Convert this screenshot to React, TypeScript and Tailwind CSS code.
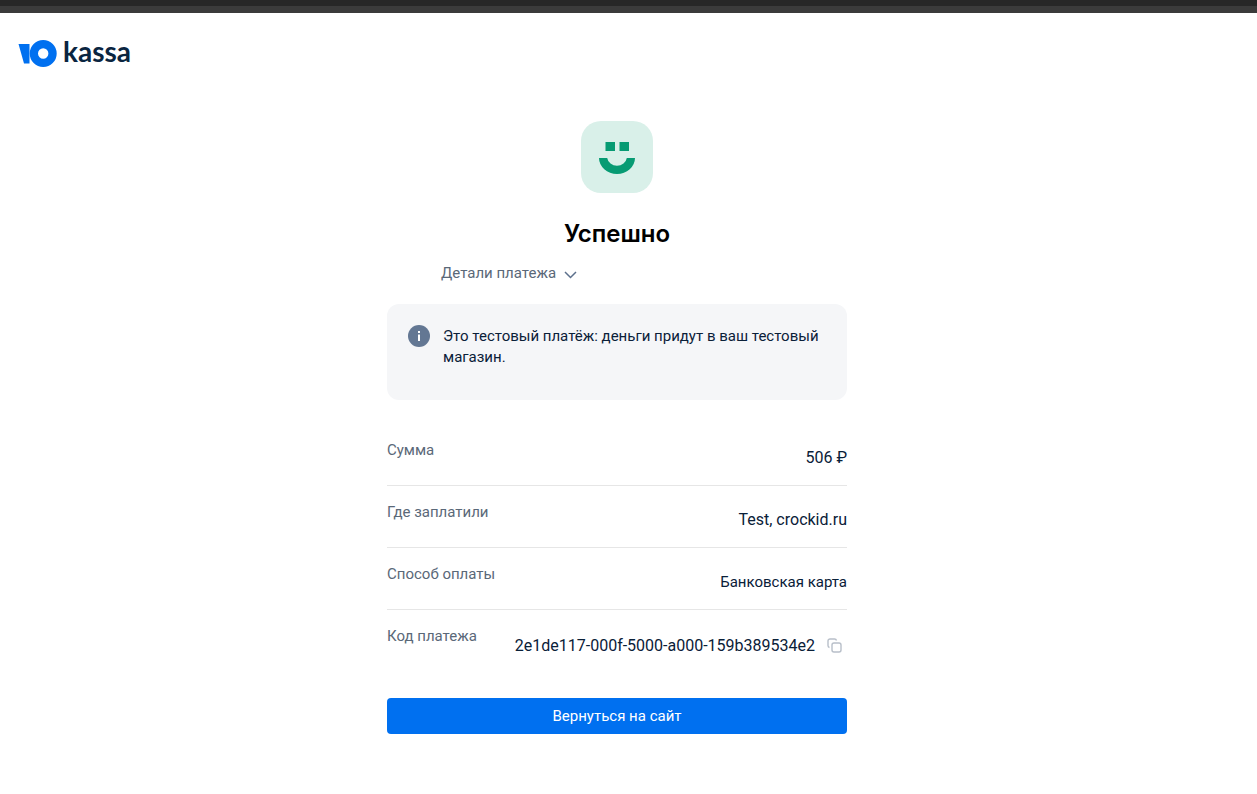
import type { ReactNode } from "react";

function Logo() {
  return (
    <a href="#" aria-label="ЮKassa" className="flex items-center gap-1.5 text-[#0a2540]">
      <svg width="39" height="28" viewBox="0 0 39 28" aria-hidden="true">
        <path d="M0.5 5H11.5V24.5H6Z" fill="#0070f0" />
        <path
          fillRule="evenodd"
          d="M25.2 1a13.5 13.5 0 1 0 0 27a13.5 13.5 0 1 0 0-27ZM25.2 9.3a5.2 5.2 0 1 1 0 10.4a5.2 5.2 0 1 1 0-10.4Z"
          fill="#0070f0"
        />
      </svg>
      <span className="pb-1 font-['Lato',sans-serif] text-[28px] leading-6 font-bold">kassa</span>
    </a>
  );
}

function Smile() {
  return (
    <svg width="72" height="72" viewBox="0 0 72 72" role="img" aria-label="Успешно">
      <rect width="72" height="72" rx="20" fill="#d9f0e9" />
      <path d="M24.5 21H34V30H24.5ZM38.5 21H48V30H38.5Z" fill="#079b73" />
      <path d="M18 37H26.2A9.9 9 0 0 0 45.8 37H54A18 16 0 0 1 18 37Z" fill="#079b73" />
    </svg>
  );
}

function Row({ label, children }: { label: string; children: ReactNode }) {
  return (
    <div className="flex justify-between border-b border-[#e6e6e6] pb-[15px] last:border-0">
      <dt className="pt-[14px] text-[#5a6878] leading-6">{label}</dt>
      <dd className="flex items-center pt-[22px] leading-6">{children}</dd>
    </div>
  );
}

export default function App() {
  return (
    <div className="min-h-screen bg-white font-['Roboto',sans-serif] text-[15px] text-[#0a2038]">
      <div className="h-[13px] border-t-[6px] border-[#272727] bg-[#3b3b3b]" />
      <header className="flex px-[18px] pt-[26px]">
        <Logo />
      </header>
      <main className="flex flex-col items-center pt-[54px] pr-[23px]">
        <Smile />
        <h1 className="mt-[25px] font-['Inter',sans-serif] text-2xl leading-8 font-semibold text-black">Успешно</h1>
        <div className="w-full max-w-[460px]">
          <button type="button" className="mt-[11px] ml-[54px] flex items-center gap-2 leading-6 text-[#5a6878]">
            Детали платежа
            <svg width="13" height="8" viewBox="0 0 13 8" fill="none" className="mt-1" aria-hidden="true">
              <path d="M1 1L6.5 6.5L12 1" stroke="#5d708c" strokeWidth="1.5" />
            </svg>
          </button>
          <div className="mt-[19px] flex min-h-24 items-start gap-[13px] rounded-xl bg-[#f5f6f8] py-[21px] pr-6 pl-[21px]">
            <svg width="22" height="22" viewBox="0 0 22 22" className="shrink-0" aria-hidden="true">
              <circle cx="11" cy="11" r="11" fill="#637793" />
              <path d="M10 6H12V8H10ZM10 9.5H12V16H10Z" fill="#fff" />
            </svg>
            <p className="pt-px leading-[21px]">
              Это тестовый платёж: деньги придут в ваш тестовый магазин.
            </p>
          </div>
          <dl className="mt-6">
            <Row label="Сумма">
              <span className="text-base">506 ₽</span>
            </Row>
            <Row label="Где заплатили">
              <span className="text-base">Test, crockid.ru</span>
            </Row>
            <Row label="Способ оплаты">Банковская карта</Row>
            <Row label="Код платежа">
              <span className="pt-0.5 text-base">2e1de117-000f-5000-a000-159b389534e2</span>
              <button type="button" aria-label="Скопировать" className="mr-[5px] ml-3">
                <svg width="15" height="15" viewBox="0 0 15 15" fill="none" stroke="#b8bfc9" strokeWidth="1.4">
                  <rect x="5" y="5" width="9" height="9" rx="2" />
                  <path d="M2.5 9.5A2 2 0 0 1 1 7.5V3A2 2 0 0 1 3 1H7.5A2 2 0 0 1 9.5 2.5" />
                </svg>
              </button>
            </Row>
          </dl>
          <button type="button" className="mt-[25px] h-9 w-full rounded bg-[#0070f0] text-white">
            Вернуться на сайт
          </button>
        </div>
      </main>
    </div>
  );
}
